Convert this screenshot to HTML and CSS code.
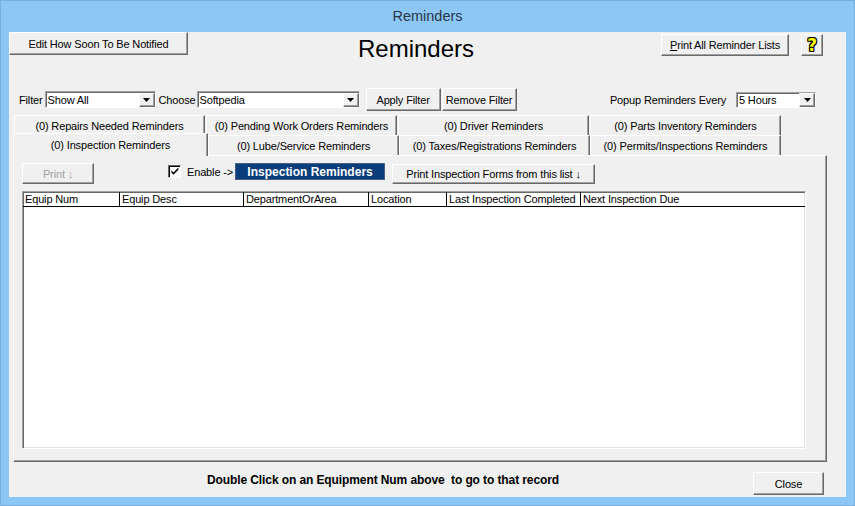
FILE: index.html
```html
<!DOCTYPE html>
<html>
<head>
<meta charset="utf-8">
<title>Reminders</title>
<link rel="stylesheet" href="styles.css">
</head>
<body>
<div class="window">
  <div class="titlebar">Reminders</div>
  <div class="client">
    <div class="toprow">
      <div class="btn btn-edit">Edit How Soon To Be Notified</div>
      <div class="heading">Reminders</div>
      <div class="spacer"></div>
      <div class="btn btn-printall"><u>P</u>rint All Reminder Lists</div>
      <div class="btn btn-help"><span class="qmark">?</span></div>
    </div>

    <div class="filterrow">
      <span class="label">Filter</span>
      <div class="select sel-filter"><span class="val">Show All</span><span class="arrow"><svg width="7" height="4" viewBox="0 0 7 4"><path d="M0 0h7L3.5 4z" fill="#000"/></svg></span></div>
      <span class="label lbl-choose">Choose</span>
      <div class="select sel-choose"><span class="val">Softpedia</span><span class="arrow"><svg width="7" height="4" viewBox="0 0 7 4"><path d="M0 0h7L3.5 4z" fill="#000"/></svg></span></div>
      <div class="btn btn-apply">Apply Filter</div>
      <div class="btn btn-remove">Remove Filter</div>
      <div class="spacer"></div>
      <span class="label">Popup Reminders Every</span>
      <div class="select sel-popup"><span class="val">5 Hours</span><span class="arrow"><svg width="7" height="4" viewBox="0 0 7 4"><path d="M0 0h7L3.5 4z" fill="#000"/></svg></span></div>
    </div>

    <div class="tabs">
      <div class="tabrow tabrow1">
        <div class="tab">(0) Repairs Needed Reminders</div>
        <div class="tab">(0) Pending Work Orders Reminders</div>
        <div class="tab">(0) Driver Reminders</div>
        <div class="tab">(0) Parts Inventory Reminders</div>
      </div>
      <div class="tabrow tabrow2">
        <div class="tab tab-sel">(0) Inspection Reminders</div>
        <div class="tab">(0) Lube/Service Reminders</div>
        <div class="tab">(0) Taxes/Registrations Reminders</div>
        <div class="tab">(0) Permits/Inspections Reminders</div>
      </div>
      <div class="panel">
        <div class="toolbar">
          <div class="btn btn-print disabled">Print ↓</div>
          <span class="checkbox"><svg width="11" height="11" viewBox="0 0 11 11"><path d="M1.5 4.2l2.3 2.4L9.2 1.2v2.4L3.8 9 1.5 6.6z" fill="#000"/></svg></span>
          <span class="enable">Enable -&gt;</span>
          <div class="insp-box">Inspection Reminders</div>
          <div class="btn btn-forms">Print Inspection Forms from this list ↓</div>
        </div>
        <div class="grid">
          <div class="ghead">
            <div class="gcol c1">Equip Num</div>
            <div class="gcol c2">Equip Desc</div>
            <div class="gcol c3">DepartmentOrArea</div>
            <div class="gcol c4">Location</div>
            <div class="gcol c5">Last Inspection Completed</div>
            <div class="gcol c6">Next Inspection Due</div>
          </div>
        </div>
      </div>
    </div>

    <div class="bottomrow">
      <div class="message">Double Click on an Equipment Num above&nbsp; to go to that record</div>
      <div class="btn btn-close">Close</div>
    </div>
  </div>
</div>
</body>
</html>
```

FILE: styles.css
```css
html, body {
  margin: 0;
  padding: 0;
}
body {
  width: 855px;
  height: 506px;
  overflow: hidden;
  background: #8cc7f8;
  font-family: "Liberation Sans", Arial, sans-serif;
  font-size: 11px;
  letter-spacing: -0.15px;
  color: #000;
}
.window {
  box-sizing: border-box;
  width: 855px;
  height: 506px;
  border: 1px solid #76aede;
  display: flex;
  flex-direction: column;
}
.titlebar {
  height: 31px;
  flex: none;
  display: flex;
  align-items: center;
  justify-content: center;
  font-size: 14.5px;
  letter-spacing: 0;
  color: #2a3644;
  padding-bottom: 1px;
  box-sizing: border-box;
}
.client {
  flex: 1;
  margin: 0 8px 8px 8px;
  background: #f0f0f0;
  display: flex;
  flex-direction: column;
  min-height: 0;
}
.spacer { flex: 1; }

/* classic raised button */
.btn {
  box-sizing: border-box;
  display: flex;
  align-items: center;
  justify-content: center;
  background: #f0f0f0;
  border: 1px solid;
  border-color: #ffffff #696969 #696969 #ffffff;
  box-shadow: inset -1px -1px 0 #a0a0a0;
  white-space: nowrap;
  flex: none;
}
.btn.disabled {
  color: #a0a0a0;
}

.toprow {
  display: flex;
  align-items: flex-start;
  height: 24px;
  flex: none;
}
.btn-edit {
  width: 179px;
  height: 23px;
}
.heading {
  margin-left: 170px;
  margin-top: 3px;
  font-size: 24px;
  line-height: 28px;
  letter-spacing: 0;
}
.btn-printall {
  margin-top: 2px;
  width: 128px;
  height: 22px;
}
.btn-help {
  margin-top: 2px;
  margin-left: 12px;
  margin-right: 23px;
  width: 22px;
  height: 22px;
}
.qmark {
  font-family: "DejaVu Sans", sans-serif;
  font-weight: bold;
  font-size: 17px;
  line-height: 18px;
  color: #ffff00;
  text-shadow: 1px 0 0 #000, -1px 0 0 #000, 0 1px 0 #000, 0 -1px 0 #000, 1px 1px 0 #000, -1px -1px 0 #000, 1px -1px 0 #000, -1px 1px 0 #000;
}

.filterrow {
  display: flex;
  align-items: center;
  height: 23px;
  margin-top: 32px;
  padding-left: 10px;
  flex: none;
}
.label {
  white-space: nowrap;
}
.lbl-choose {
  margin-left: 3px;
}
.select {
  box-sizing: border-box;
  display: flex;
  align-items: center;
  height: 17px;
  background: #fff;
  border: 1px solid;
  border-color: #a0a0a0 #ffffff #ffffff #a0a0a0;
  box-shadow: inset 1px 1px 0 #696969;
  flex: none;
  margin-left: 2px;
}
.select .val {
  flex: 1;
  padding-left: 2px;
  line-height: 14px;
  white-space: nowrap;
}
.select .arrow {
  box-sizing: border-box;
  width: 16px;
  height: 14px;
  margin-top: 1px;
  background: #f0f0f0;
  border: 1px solid;
  border-color: #ffffff #696969 #696969 #ffffff;
  box-shadow: inset -1px -1px 0 #a0a0a0;
  display: flex;
  align-items: center;
  justify-content: center;
}
.sel-filter { width: 111px; }
.sel-choose { width: 163px; margin-left: 1px; }
.sel-popup { width: 80px; margin-left: 10px; margin-right: 30px; height: 16px; }
.btn-apply {
  width: 75px;
  height: 23px;
  margin-left: 6px;
}
.btn-remove {
  width: 75px;
  height: 23px;
  margin-left: 1px;
}

.tabs {
  margin-top: 4px;
  margin-left: 4px;
  width: 814px;
  flex: none;
}
.tabrow {
  display: flex;
  align-items: flex-start;
  height: 20px;
}
.tabrow1 {
  padding-left: 1px;
  gap: 1px;
}
.tab {
  box-sizing: border-box;
  width: 191px;
  height: 20px;
  display: flex;
  align-items: center;
  justify-content: center;
  background: #f0f0f0;
  border-top: 1px solid #ffffff;
  border-left: 1px solid #ffffff;
  border-right: 1px solid #696969;
  box-shadow: inset -1px 0 0 #a0a0a0;
  white-space: nowrap;
  flex: none;
  padding-top: 1px;
}
.tabrow2 .tab.tab-sel {
  width: 195px;
  height: 23px;
  margin-top: -2px;
  position: relative;
  z-index: 1;
  padding-top: 0;
}
.panel {
  box-sizing: border-box;
  width: 814px;
  height: 307px;
  border: 1px solid;
  border-color: #ffffff #696969 #696969 #ffffff;
  box-shadow: inset -1px -1px 0 #a0a0a0;
  padding: 7px 0 0 8px;
}
.toolbar {
  display: flex;
  align-items: flex-start;
  height: 21px;
}
.btn-print {
  width: 72px;
  height: 21px;
}
.checkbox {
  box-sizing: border-box;
  width: 13px;
  height: 13px;
  margin-left: 74px;
  margin-top: 2px;
  background: #fff;
  border: 1px solid;
  border-color: #696969 #ffffff #ffffff #696969;
  box-shadow: inset 1px 1px 0 #000;
  display: flex;
  align-items: center;
  justify-content: center;
  flex: none;
}
.checkbox svg {
  display: block;
  margin: 0 0 0 1px;
}
.enable {
  margin-left: 6px;
  margin-top: 2px;
  line-height: 14px;
  white-space: nowrap;
}
.insp-box {
  box-sizing: border-box;
  width: 150px;
  height: 17px;
  margin-left: 2px;
  background: #093d7b;
  border: 1px solid #48607e;
  color: #fff;
  font-weight: bold;
  font-size: 12px;
  letter-spacing: 0;
  display: flex;
  align-items: center;
  justify-content: center;
  flex: none;
}
.btn-forms {
  width: 203px;
  height: 20px;
  margin-left: 7px;
  margin-top: 1px;
}
.grid {
  box-sizing: border-box;
  margin-top: 7px;
  width: 784px;
  height: 258px;
  background: #fff;
  border: 1px solid;
  border-color: #a0a0a0 #ffffff #ffffff #a0a0a0;
  box-shadow: inset 1px 1px 0 #696969, inset -1px -1px 0 #e3e3e3;
}
.ghead {
  display: flex;
  height: 15px;
  box-sizing: border-box;
  border-bottom: 1px solid #000;
}
.gcol {
  box-sizing: border-box;
  border-right: 1px solid #000;
  padding-left: 2px;
  line-height: 14px;
  white-space: nowrap;
  overflow: hidden;
  flex: none;
}
.c1 { width: 97px; }
.c2 { width: 124px; }
.c3 { width: 125px; }
.c4 { width: 78px; }
.c5 { width: 134px; }
.c6 { flex: 1; border-right: none; }

.bottomrow {
  display: flex;
  align-items: flex-start;
  padding-top: 10px;
  flex: none;
}
.message {
  flex: 1;
  margin-left: 198px;
  margin-top: 2px;
  font-weight: bold;
  font-size: 12px;
  line-height: 13px;
  letter-spacing: -0.1px;
  white-space: nowrap;
}
.btn-close {
  width: 71px;
  height: 23px;
  margin-right: 22px;
}
```
